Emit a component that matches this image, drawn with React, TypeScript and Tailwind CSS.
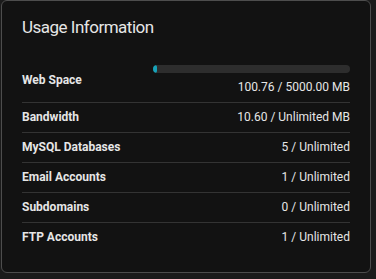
import React from 'react';

interface UsageRow {
  label: string;
  value: string;
}

const rows: UsageRow[] = [
  { label: 'Bandwidth', value: '10.60 / Unlimited MB' },
  { label: 'MySQL Databases', value: '5 / Unlimited' },
  { label: 'Email Accounts', value: '1 / Unlimited' },
  { label: 'Subdomains', value: '0 / Unlimited' },
  { label: 'FTP Accounts', value: '1 / Unlimited' },
];

const App: React.FC = () => {
  const used = 100.76;
  const total = 5000;
  const pct = Math.max((used / total) * 100, 2);

  return (
    <div className="w-[376px] h-[279px] bg-[#1b1b1b] font-['Roboto',sans-serif]">
      <div className="ml-[1px] w-[370px] h-[273px] rounded-md border border-[#4d4d4d] bg-[#121212] px-[20px] pt-[14px]">
        <h2 className="text-[17px] leading-6 tracking-[-0.5px] text-[#e6e6e6] font-normal">Usage Information</h2>

        <div className="mt-[18px]">
          <div className="flex items-center justify-between border-b border-[#333] pt-[8px] pb-[8px]">
            <span className="text-[12px] font-bold text-[#e6e6e6]">Web Space</span>
            <div className="flex w-[197px] flex-col items-end">
              <div className="h-[8px] w-full overflow-hidden rounded-full bg-[#2d2d2d]">
                <div className="h-full rounded-full bg-[#17a2b8]" style={{ width: `${pct}%` }} />
              </div>
              <span className="mt-[7px] text-[12px] leading-[14px] text-[#e6e6e6]">100.76 / 5000.00 MB</span>
            </div>
          </div>

          {rows.map((row, i) => (
            <div
              key={row.label}
              className={`flex items-center justify-between py-[7px] ${
                i < rows.length - 1 ? 'border-b border-[#333]' : ''
              }`}
            >
              <span className="text-[12px] leading-[15px] font-bold text-[#e6e6e6]">{row.label}</span>
              <span className="text-[12px] leading-[15px] text-[#e6e6e6]">{row.value}</span>
            </div>
          ))}
        </div>
      </div>
    </div>
  );
};

export default App;
